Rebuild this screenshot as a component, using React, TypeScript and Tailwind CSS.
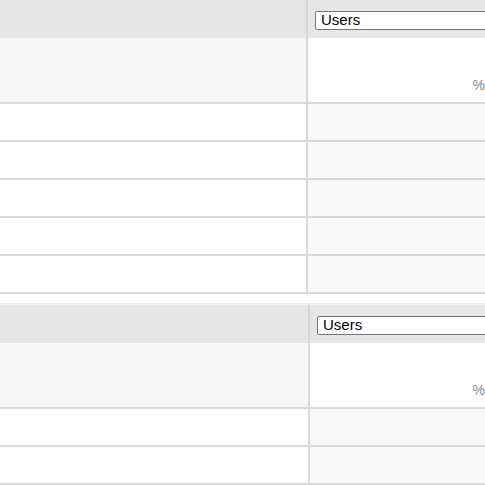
import React from "react";

const font = { fontFamily: '"Liberation Sans", Arial, sans-serif' };

function Table({ leftW, top }: { leftW: string; top?: boolean }) {
  const rows = top ? [0, 1, 2, 3, 4] : [0, 1];
  return (
    <div className={top ? "" : "border-t-2 border-[#f0f0f0]"}>
      {/* Kopfzeile */}
      <div className="flex h-[38px] bg-[#e6e6e6]">
        <div className={`${leftW} shrink-0 border-r-2 border-[#d6d6d6]`} />
        <div className="flex flex-1 items-center pl-[7px] pt-[2px]">
          <div className="flex h-[19px] w-[200px] items-center rounded-[2px] border border-[#767676] bg-white pl-[5px] text-[15px] text-black">
            Users
          </div>
        </div>
      </div>
      {/* Prozentzeile */}
      <div className="flex h-[66px] border-b-2 border-[#d9d9d9]">
        <div className={`${leftW} shrink-0 border-r-2 border-[#d9d9d9] bg-[#f7f7f7]`} />
        <div className="flex flex-1 items-end justify-end bg-white pb-[6px]">
          <span className="text-[14px] text-[#8a8a8a]">%</span>
        </div>
      </div>
      {rows.map((r) => (
        <div key={r} className="flex h-[38px] border-b-2 border-[#d9d9d9]">
          <div className={`${leftW} shrink-0 border-r-2 border-[#d9d9d9] bg-white`} />
          <div className="flex-1 bg-[#f9f9f9]" />
        </div>
      ))}
    </div>
  );
}

export default function App() {
  return (
    <div className="h-[485px] w-[485px] overflow-hidden bg-white" style={font}>
      <div className="w-[485px]">
        <Table leftW="w-[308px]" top />
        <div className="h-[9px]" />
        <Table leftW="w-[310px]" />
      </div>
    </div>
  );
}
